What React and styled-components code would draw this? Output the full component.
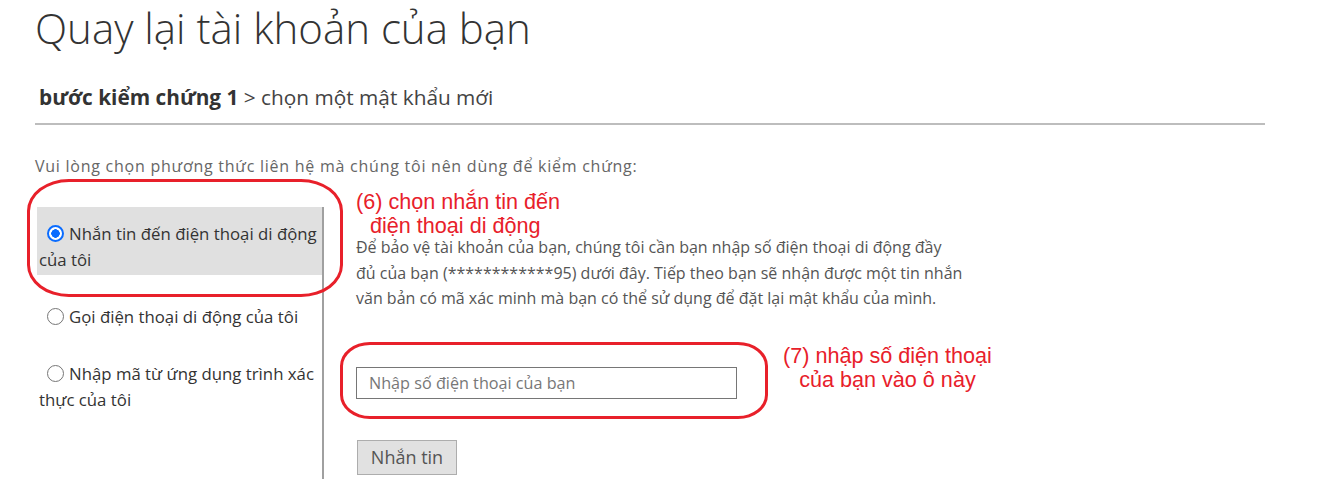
import React from 'react';
import styled, { createGlobalStyle } from 'styled-components';

const GlobalStyle = createGlobalStyle`
    html, body {
        margin: 0;
        padding: 0;
        background: #fff;
    }
    body {
        font-family: 'Open Sans', 'Noto Sans', sans-serif;
        color: #333;
    }
`;

const Page = styled.div`
    padding: 0 68px 0 35px;
    overflow: hidden;
    height: 479px;
    box-sizing: border-box;
`;

const Title = styled.h1`
    margin: 0;
    padding-top: 4px;
    font-size: 42px;
    line-height: 48px;
    font-weight: 300;
    color: #333;
    white-space: nowrap;
`;

const Breadcrumb = styled.div`
    margin-top: 31px;
    padding: 0 0 12px 4px;
    font-size: 20.8px;
    line-height: 28px;
    color: #444;
    border-bottom: 2px solid #bdbdbd;
    b {
        font-weight: 700;
        color: #333;
    }
`;

const Instruction = styled.p`
    margin: 29px 0 0;
    font-size: 16px;
    letter-spacing: 0.75px;
    line-height: 24px;
    color: #666;
`;

const Columns = styled.div`
    display: flex;
    margin-top: 12px;
`;

const Methods = styled.div`
    flex: none;
    width: 287px;
    margin-top: 17px;
    border-right: 2px solid #a0a0a0;
    min-height: 300px;
    display: flex;
    flex-direction: column;
    gap: 15px;
`;

const Method = styled.label`
    position: relative;
    display: block;
    margin-left: 2px;
    padding: 14px 4px 2px 2px;
    font-size: 16.8px;
    line-height: 26px;
    color: #333;
    white-space: nowrap;
    background: ${p => (p.$active ? '#e0e0e0' : 'transparent')};
`;

const Radio = styled.input.attrs({ type: 'radio' })`
    appearance: none;
    box-sizing: border-box;
    width: 17px;
    height: 17px;
    margin: 0 5px 0 8px;
    vertical-align: -2px;
    border-radius: 50%;
    border: 1px solid #767676;
    background: #fff;
    &:checked {
        border: 2.5px solid #0a6cff;
        background: radial-gradient(circle, #0a6cff 0 4px, #fff 4.5px);
    }
`;

const Ring = styled.div`
    position: absolute;
    top: ${p => p.$t}px;
    left: ${p => p.$l}px;
    right: ${p => p.$r}px;
    bottom: ${p => p.$b}px;
    border: 3px solid #e8202a;
    border-radius: ${p => p.$radius};
    pointer-events: none;
`;

const Detail = styled.div`
    margin-left: 32px;
    flex: 1;
`;

const Note = styled.div`
    font-family: 'Liberation Sans', Arial, sans-serif;
    font-size: 21.6px;
    line-height: 24px;
    color: #e8202a;
    white-space: nowrap;
    text-align: ${p => (p.$center ? 'center' : 'left')};
    margin-left: ${p => p.$offset || 0}px;
    span {
        padding-left: 14px;
    }
`;

const Text = styled.p`
    margin: -3px 0 0;
    font-size: 16px;
    line-height: 25.5px;
    color: #555;
    white-space: nowrap;
`;

const InputRow = styled.div`
    display: flex;
    align-items: flex-start;
    margin-top: 32px;
`;

const Field = styled.div`
    position: relative;
    margin-top: 23px;
`;

const PhoneInput = styled.input`
    display: block;
    box-sizing: border-box;
    width: 381px;
    height: 32px;
    padding: 0 12px;
    border: 1px solid #767676;
    font-family: 'Open Sans', sans-serif;
    font-size: 16.2px;
    color: #333;
    outline: none;
    &::placeholder {
        color: #777;
    }
`;

const SendButton = styled.button`
    display: block;
    margin: 41px 0 0 1px;
    width: 100px;
    height: 35px;
    background: #e1e1e1;
    border: 1px solid #adadad;
    font-family: 'Open Sans', sans-serif;
    font-size: 18px;
    color: #555;
    padding: 0;
`;

const App = () => {
    return (
        <Page>
            <GlobalStyle />
            <Title>Quay lại tài khoản của bạn</Title>
            <Breadcrumb>
                <b>bước kiểm chứng 1</b> &gt; chọn một mật khẩu mới
            </Breadcrumb>
            <Instruction>Vui lòng chọn phương thức liên hệ mà chúng tôi nên dùng để kiểm chứng:</Instruction>
            <Columns>
                <Methods>
                    <Method $active>
                        <Radio name="method" defaultChecked />
                        Nhắn tin đến điện thoại di động
                        <br />
                        của tôi
                        <Ring $t={-28} $l={-10} $r={-21} $b={-22} $radius="42px / 32px" />
                    </Method>
                    <Method>
                        <Radio name="method" />
                        Gọi điện thoại di động của tôi
                    </Method>
                    <Method>
                        <Radio name="method" />
                        Nhập mã từ ứng dụng trình xác
                        <br />
                        thực của tôi
                    </Method>
                </Methods>
                <Detail>
                    <Note>
                        (6) chọn nhắn tin đến
                        <br />
                        <span>điện thoại di động</span>
                    </Note>
                    <Text>
                        Để bảo vệ tài khoản của bạn, chúng tôi cần bạn nhập số điện thoại di động đầy
                        <br />
                        đủ của bạn (************95) dưới đây. Tiếp theo bạn sẽ nhận được một tin nhắn
                        <br />
                        văn bản có mã xác minh mà bạn có thể sử dụng để đặt lại mật khẩu của mình.
                    </Text>
                    <InputRow>
                        <Field>
                            <PhoneInput placeholder="Nhập số điện thoại của bạn" />
                            <Ring $t={-25} $l={-16} $r={-31} $b={-20} $radius="30px / 24px" />
                        </Field>
                        <Note $center $offset={46}>
                            (7) nhập số điện thoại
                            <br />
                            của bạn vào ô này
                        </Note>
                    </InputRow>
                    <SendButton>Nhắn tin</SendButton>
                </Detail>
            </Columns>
        </Page>
    );
};

export default App;
